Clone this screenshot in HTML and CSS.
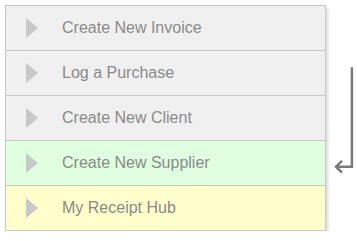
FILE: index.html
```html
<!DOCTYPE html>
<html>
  <head>
    <title>Quick menu</title>
    <link rel="stylesheet" href="styles.css">
  </head>
  <body>
    <div class="wrap">
      <ul class="menu">
        <li class="item"><span class="tri"></span>Create New Invoice</li>
        <li class="item"><span class="tri"></span>Log a Purchase</li>
        <li class="item"><span class="tri"></span>Create New Client</li>
        <li class="item green"><span class="tri"></span>Create New Supplier</li>
        <li class="item yellow"><span class="tri"></span>My Receipt Hub</li>
      </ul>
      <svg class="arrow" width="24" height="110" viewBox="0 0 24 110">
        <path d="M19 0 V100 H3" fill="none" stroke="#7a7a7a" stroke-width="2.5"/>
        <path d="M9 94 L3 100 L9 106" fill="none" stroke="#7a7a7a" stroke-width="2.5"/>
      </svg>
    </div>
  </body>
</html>
```
FILE: styles.css
```css
body {
  margin: 0;
  font-family: "Liberation Sans", Arial, sans-serif;
}
.wrap {
  display: flex;
  align-items: flex-start;
  padding: 5px 0 0 5px;
}
.menu {
  list-style: none;
  margin: 0;
  padding: 0;
  width: 321px;
  border: 1px solid #c8c8c8;
  box-shadow: 2px 3px 3px rgba(0, 0, 0, 0.15);
}
.item {
  display: flex;
  align-items: center;
  height: 44px;
  background: #f0f0f0;
  color: #8a8a8a;
  font-size: 16px;
  border-top: 1px solid #c8c8c8;
}
.item:first-child {
  border-top: none;
}
.item.green { background: #e0ffe0; }
.item.yellow { background: #ffffcc; }
.tri {
  width: 0;
  height: 0;
  border-top: 10px solid transparent;
  border-bottom: 10px solid transparent;
  border-left: 12px solid #c8c8c8;
  margin: 0 24px 0 20px;
}
.arrow {
  margin: 62px 0 0 7px;
}
```
